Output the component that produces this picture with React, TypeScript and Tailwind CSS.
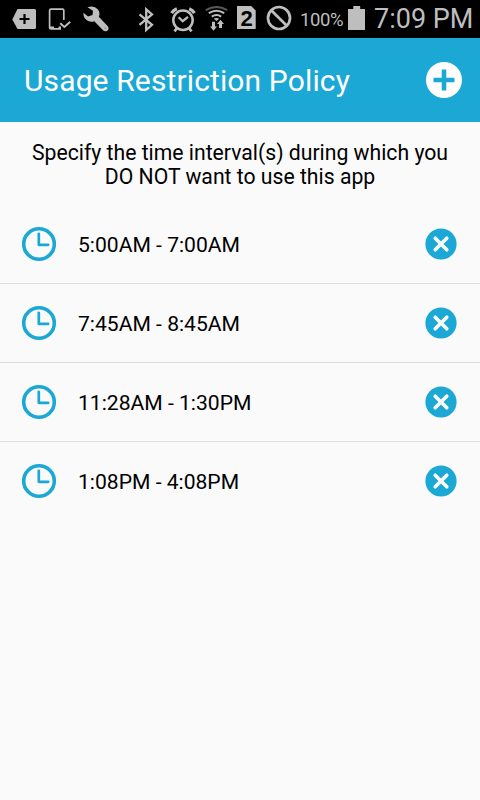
import React from "react";

const intervals = [
  "5:00AM - 7:00AM",
  "7:45AM - 8:45AM",
  "11:28AM - 1:30PM",
  "1:08PM - 4:08PM",
];

// Status glyphs share the coordinate space of the 38px bar.
function Glyph({ x, w, children, className = "" }: { x: number; w: number; children: React.ReactNode; className?: string }) {
  return (
    <svg className={`shrink-0 ${className}`} width={w} height={38} viewBox={`${x} 0 ${w} 38`} fill="none" stroke="none">
      {children}
    </svg>
  );
}

const C = "#bebebe";

function StatusBar() {
  return (
    <div className="flex h-[38px] items-center bg-black pl-3 text-[#bebebe]">
      <Glyph x={12} w={24}>
        <path d="M17.5 9H34.5Q36 9 36 10.5V27.5Q36 29 34.5 29H17.5L12.3 19.5Z" fill={C} />
        <path d="M24.5 14V24M19.5 19H29.5" stroke="#000" strokeWidth="2.2" />
      </Glyph>
      <Glyph x={48} w={24} className="ml-3">
        <path d="M63.8 20V10.6Q63.8 9.2 62.4 9.2H51Q49.6 9.2 49.6 10.6V27.4Q49.6 28.8 51 28.8H61" stroke={C} strokeWidth="1.7" />
        <path d="M50 26.6H54V28.8H50ZM58.5 26.5H61V28.8H58.5Z" fill={C} />
        <path d="M60.2 23.2L64.4 27L70.2 21.8" stroke={C} strokeWidth="1.9" />
      </Glyph>
      <Glyph x={83} w={27} className="ml-[11px]">
        <path d="M87.5 7.3Q94 5 98 9.5Q100.5 13 98.8 16.8L107.8 26.2Q109.5 28.5 107.5 30.5Q105.2 32.3 103 30.3L94.3 21.2Q90 22.7 86.5 20Q83 17 83.5 12.8L88 16.5L92.5 15L93 10.7Z" fill={C} />
        <circle cx="105.3" cy="28.3" r="1" fill="#999" />
      </Glyph>
      <Glyph x={138} w={17} className="ml-7">
        <path d="M139.5 14.3L152 24.8L146.2 30V9.3L152 14.5L139.5 24.8" stroke={C} strokeWidth="2.3" />
      </Glyph>
      <Glyph x={170} w={27} className="ml-[15px]">
        <circle cx="183" cy="20.2" r="9.7" stroke={C} strokeWidth="2.5" />
        <path d="M178.7 17.2L182.7 21.2L188 16.8" stroke={C} strokeWidth="2.2" />
        <path d="M171.6 13.1Q173.4 9.9 176.8 8.7M189.2 8.7Q192.6 9.9 194.4 13.1" stroke={C} strokeWidth="3.2" />
        <path d="M177 28L174.5 31.3M189 28L191.5 31.3" stroke={C} strokeWidth="2.8" />
      </Glyph>
      <Glyph x={205} w={23} className="ml-2">
        <path d="M205.8 10.2Q216.5 3.8 227.2 10.2" stroke="#595959" strokeWidth="2" />
        <path d="M208.8 13.2Q216.5 8.2 224.2 13.2M211.8 16.6Q216.5 13.2 221.2 16.6" stroke={C} strokeWidth="2" />
        <path d="M213.8 18.8Q216.5 17 219.2 18.8L216.5 21Z" fill={C} />
        <path d="M212 21.8H215V26.5H217L213.5 30.8L210 26.5H212ZM219 28V24H217L220.5 19.8L224 24H222V28Z" fill={C} />
      </Glyph>
      <Glyph x={237} w={19} className="ml-[9px]">
        <path d="M237 6H251.2L255.7 10.5V29H237Z" fill={C} />
        <text x="246.5" y="25.6" textAnchor="middle" fontFamily="Liberation Sans, sans-serif" fontSize="22" fontWeight="700" fill="#000">2</text>
      </Glyph>
      <Glyph x={266} w={26} className="ml-2.5">
        <circle cx="279" cy="18" r="11" stroke={C} strokeWidth="2.7" />
        <path d="M271.2 10.2L286.8 25.8" stroke={C} strokeWidth="2.7" />
      </Glyph>
      <span className="ml-2 w-12 whitespace-nowrap pt-0.5 text-[18.5px] leading-none tracking-[-0.4px]">100%</span>
      <Glyph x={348} w={17}>
        <path d="M353.3 6H360.2V9H365V30H348V9H353.3Z" fill={C} />
      </Glyph>
      <span className="ml-[9px] whitespace-nowrap text-[27px] leading-none">7:09 PM</span>
    </div>
  );
}

function ClockIcon() {
  return (
    <svg className="shrink-0" width="36" height="36" viewBox="0 0 36 36" fill="none" stroke="#1ba8d4">
      <circle cx="18" cy="18" r="15.3" strokeWidth="3.6" />
      <path d="M17.8 7.8V18.8H27.2" strokeWidth="2.7" strokeLinecap="round" strokeLinejoin="round" />
    </svg>
  );
}

function RemoveIcon() {
  return (
    <svg width="32" height="32" viewBox="0 0 32 32">
      <circle cx="16" cy="16" r="15.6" fill="#1ba8d4" />
      <path d="M10.2 10.2L21.8 21.8M21.8 10.2L10.2 21.8" stroke="#fafafa" strokeWidth="3.6" strokeLinecap="round" />
    </svg>
  );
}

export default function App() {
  return (
    <div className="h-[800px] w-[480px] overflow-hidden bg-[#fafafa] font-[Roboto,sans-serif] text-black">
      <StatusBar />
      <header className="flex h-[84px] items-center justify-between bg-[#1ba8d4] pl-6 pr-[17px]">
        <h1 className="whitespace-nowrap pt-0.5 text-[30px] leading-none tracking-[0.13px] text-white">Usage Restriction Policy</h1>
        <svg width="38" height="38" viewBox="0 0 38 38">
          <circle cx="19" cy="19" r="18" fill="#fff" />
          <path d="M19 8.5V29.5M8.5 19H29.5" stroke="#1ba8d4" strokeWidth="4.6" />
        </svg>
      </header>
      <p className="h-[83px] whitespace-nowrap pt-[19px] text-center text-[21.2px] leading-6">
        Specify the time interval(s) during which you
        <br />
        DO NOT want to use this app
      </p>
      <ul>
        {intervals.map((label) => (
          <li key={label} className="flex h-[79px] items-center border-b border-[#dedede] pl-[21px] pr-[23px] last:border-transparent">
            <ClockIcon />
            <span className="ml-[21px] grow whitespace-nowrap pt-px text-[21.1px] leading-6">{label}</span>
            <button type="button" aria-label="Remove">
              <RemoveIcon />
            </button>
          </li>
        ))}
      </ul>
    </div>
  );
}
